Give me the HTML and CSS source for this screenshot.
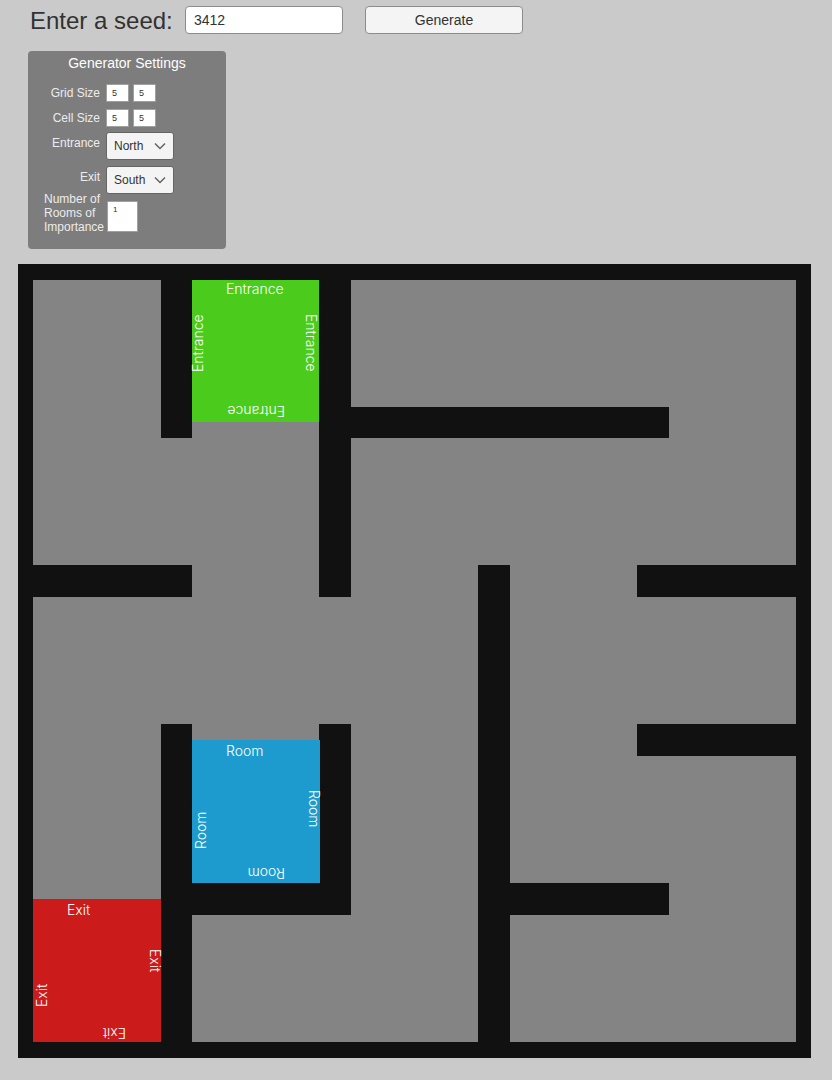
FILE: index.html
```html
<!DOCTYPE html>
<html lang="en">
<head>
<meta charset="utf-8">
<meta name="viewport" content="width=device-width, initial-scale=1">
<title>Maze Generator</title>
<link rel="stylesheet" href="styles.css">
</head>
<body>
<form class="controls">
  <div class="seed-bar">
    <label class="seed-label" for="seed">Enter a seed:</label>
    <input class="seed-input" id="seed" type="text" value="3412">
    <button class="generate" type="button">Generate</button>
  </div>
  <section class="settings" aria-labelledby="settings-title">
    <h2 class="settings-title" id="settings-title">Generator Settings</h2>
    <div class="row">
      <label class="row-label" for="grid-w">Grid Size</label>
      <input class="size-input" id="grid-w" type="text" value="5">
      <input class="size-input" type="text" value="5" aria-label="Grid height">
    </div>
    <div class="row">
      <label class="row-label" for="cell-w">Cell Size</label>
      <input class="size-input" id="cell-w" type="text" value="5">
      <input class="size-input" type="text" value="5" aria-label="Cell height">
    </div>
    <div class="row row-select">
      <label class="row-label" for="entrance">Entrance</label>
      <span class="select-box">
        <select class="select" id="entrance"><option>North</option><option>South</option><option>East</option><option>West</option></select>
        <svg class="chevron" viewBox="0 0 12 8" aria-hidden="true"><path d="M1 1.500 6 6.500l5-5"/></svg>
      </span>
    </div>
    <div class="row row-select">
      <label class="row-label" for="exit">Exit</label>
      <span class="select-box">
        <select class="select" id="exit"><option>South</option><option>North</option><option>East</option><option>West</option></select>
        <svg class="chevron" viewBox="0 0 12 8" aria-hidden="true"><path d="M1 1.500 6 6.500l5-5"/></svg>
      </span>
    </div>
    <div class="row row-rooms">
      <label class="rooms-label" for="rooms">Number of<br>Rooms of<br>Importance</label>
      <textarea class="rooms-input" id="rooms" rows="1">1</textarea>
    </div>
  </section>
</form>
<main class="maze-area">
  <svg class="maze" viewBox="0 0 793 794" role="img" aria-label="Generated maze">
    <rect class="wall" width="793" height="794"/>
    <rect class="floor" x="15" y="16" width="763" height="762"/>
    <g class="wall">
      <rect x="143" y="16" width="31" height="158"/>
      <rect x="301" y="16" width="32" height="317"/>
      <rect x="333" y="143" width="318" height="31"/>
      <rect x="15" y="301" width="159" height="32"/>
      <rect x="619" y="301" width="159" height="32"/>
      <rect x="460" y="301" width="32" height="477"/>
      <rect x="619" y="460" width="159" height="32"/>
      <rect x="143" y="460" width="31" height="318"/>
      <rect x="301" y="460" width="32" height="191"/>
      <rect x="174" y="619" width="159" height="32"/>
      <rect x="492" y="619" width="159" height="32"/>
    </g>
    <rect class="entrance" x="174" y="16" width="127" height="142"/>
    <rect class="room" x="174" y="476" width="128" height="143"/>
    <rect class="exit" x="15" y="635" width="128" height="143"/>
    <g class="tag">
      <text transform="translate(208 30)">Entrance</text>
      <text transform="translate(185 108) rotate(-90)">Entrance</text>
      <text transform="translate(288 50) rotate(90)">Entrance</text>
      <text transform="translate(267 142) rotate(180)">Entrance</text>
      <text transform="translate(208 492)">Room</text>
      <text transform="translate(188 585) rotate(-90)">Room</text>
      <text transform="translate(291 526) rotate(90)">Room</text>
      <text transform="translate(267 604) rotate(180)">Room</text>
      <text transform="translate(49 651)">Exit</text>
      <text transform="translate(29 743) rotate(-90)">Exit</text>
      <text transform="translate(132 685) rotate(90)">Exit</text>
      <text transform="translate(108 764) rotate(180)">Exit</text>
    </g>
  </svg>
</main>
</body>
</html>
```
FILE: styles.css
```css
* {
  box-sizing: border-box;
}

body {
  margin: 0;
  background: #cacaca;
  color: #323232;
  font-family: "Liberation Sans", Arial, sans-serif;
}

input,
button,
select,
textarea {
  margin: 0;
  color: #323232;
  font-family: inherit;
}

.controls {
  padding: 6px 28px 0;
}

.seed-bar {
  display: flex;
  align-items: center;
  height: 28px;
  padding-left: 2px;
}

.seed-label {
  width: 155px;
  padding-top: 2px;
  font-size: 24px;
  line-height: 28px;
  white-space: nowrap;
}

.seed-input,
.generate {
  width: 158px;
  height: 28px;
  border: 1px solid #8c8c8c;
  border-radius: 4px;
  font-size: 14px;
}

.seed-input {
  padding: 0 8px;
  background: #fff;
}

.generate {
  margin-left: 22px;
  padding: 0;
  background: #f4f4f4;
}

.settings {
  width: 198px;
  margin-top: 17px;
  padding: 4px 0 15px;
  border-radius: 4px;
  background: #7d7d7d;
  color: #ececec;
  font-size: 12px;
}

.settings-title {
  margin: 0 0 13px;
  color: #fff;
  font-size: 14px;
  font-weight: 400;
  line-height: 16px;
  text-align: center;
}

.row {
  display: flex;
  align-items: flex-start;
  gap: 4px;
  margin-bottom: 7px;
}

.row-label {
  width: 72px;
  margin-right: 2px;
  line-height: 18px;
  text-align: right;
}

.size-input {
  width: 23px;
  height: 18px;
  padding: 0 5px;
  border: 1px solid #a0a0a0;
  border-radius: 1px;
  background: #fff;
  font-size: 9px;
}

.row-select {
  margin-bottom: 8px;
}

.select-box {
  position: relative;
  width: 68px;
  margin-top: -2px;
}

.select {
  display: block;
  width: 100%;
  height: 28px;
  padding: 0 7px;
  border: 1px solid #646464;
  border-radius: 3px;
  appearance: none;
  background: #f4f4f4;
  font-size: 12px;
}

.chevron {
  position: absolute;
  top: 10px;
  right: 8px;
  width: 12px;
  height: 8px;
  fill: none;
  stroke: #646464;
  stroke-width: 1.5;
  pointer-events: none;
}

.row-rooms {
  gap: 3px;
  margin: -10px 0 0;
  padding-left: 16px;
}

.rooms-label {
  line-height: 14px;
}

.rooms-input {
  width: 31px;
  height: 31px;
  margin-top: 9px;
  padding: 3px 5px;
  border: 1px solid #a0a0a0;
  border-radius: 1px;
  background: #fff;
  font-size: 8px;
  line-height: 9px;
  resize: none;
  overflow: hidden;
}

.maze-area {
  padding: 15px 21px 22px 18px;
}

.maze {
  display: block;
  width: 100%;
}

.wall {
  fill: #111;
}

.floor {
  fill: #848484;
}

.entrance {
  fill: #4bcb1b;
}

.room {
  fill: #1d9bce;
}

.exit {
  fill: #cb1b1b;
}

.tag {
  fill: #fff;
  font-family: Inter, "Liberation Sans", sans-serif;
  font-size: 14px;
  font-weight: 300;
}
```
